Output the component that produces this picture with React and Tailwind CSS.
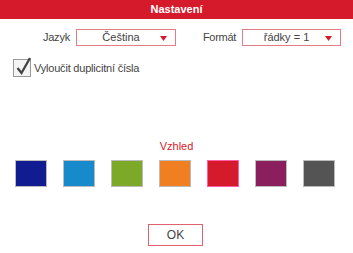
import React from "react";

/* ================= SELECT ================= */
function Select({ value, className }) {
  return (
    <div className={"relative h-[17px] border border-[#e57b85] bg-white flex items-center justify-center pr-[10px] " + className}>
      <span className="text-[11px] text-[#444]">{value}</span>
      <svg className="absolute right-[8px] top-[6px]" width="7" height="5" viewBox="0 0 7 5">
        <polygon points="0,0 7,0 3.5,5" fill="#d51a2b" />
      </svg>
    </div>
  );
}

/* ================= APP ================= */
export default function App() {
  const colors = ["#101c8f", "#168acb", "#7caa28", "#f07f22", "#d51a2b", "#8b1f5e", "#545454"];

  return (
    <div className="w-[353px] h-[253px] bg-white overflow-hidden" style={{ fontFamily: '"Liberation Sans", Arial, sans-serif' }}>
      <div className="h-[19px] bg-[#d51a2b] flex items-center justify-center">
        <span className="text-white text-[11px] font-bold">Nastavení</span>
      </div>

      <div className="flex items-center mt-[10px]">
        <span className="w-[70px] text-right text-[11px] text-[#444] tracking-[-0.2px]">Jazyk</span>
        <Select value="Čeština" className="ml-[6px] w-[100px]" />
        <span className="w-[60px] text-right text-[11px] text-[#444] tracking-[-0.3px]">Formát</span>
        <Select value="řádky = 1" className="ml-[6px] w-[99px]" />
      </div>

      <div className="flex items-center mt-[13px] ml-[13px]">
        <div className="w-[18px] h-[18px] border border-[#999] bg-[#f4f4f4] relative">
          <svg className="absolute left-[1px] top-[-3px]" width="17" height="19" viewBox="0 0 17 19">
            <path d="M2.5 11 L6.5 16 L15 1" stroke="#444" strokeWidth="2.3" fill="none" />
          </svg>
        </div>
        <span className="ml-[3px] text-[11px] text-[#444] tracking-[-0.2px]">Vyloučit duplicitní čísla</span>
      </div>

      <div className="mt-[61px] text-center text-[11px] text-[#d51a2b]">Vzhled</div>

      <div className="flex gap-[16px] ml-[15px] mt-[5px]">
        {colors.map((c, i) => (
          <div
            key={i}
            className={"w-[32px] h-[27px] border " + (i === 4 ? "border-[#ff5fa8]" : "border-[#bbb]")}
            style={{ backgroundColor: c }}
          />
        ))}
      </div>

      <div className="flex justify-center mt-[37px]">
        <div className="w-[55px] h-[22px] mr-[2px] border border-[#e0606e] flex items-center justify-center text-[12px] text-[#444]">
          OK
        </div>
      </div>
    </div>
  );
}
